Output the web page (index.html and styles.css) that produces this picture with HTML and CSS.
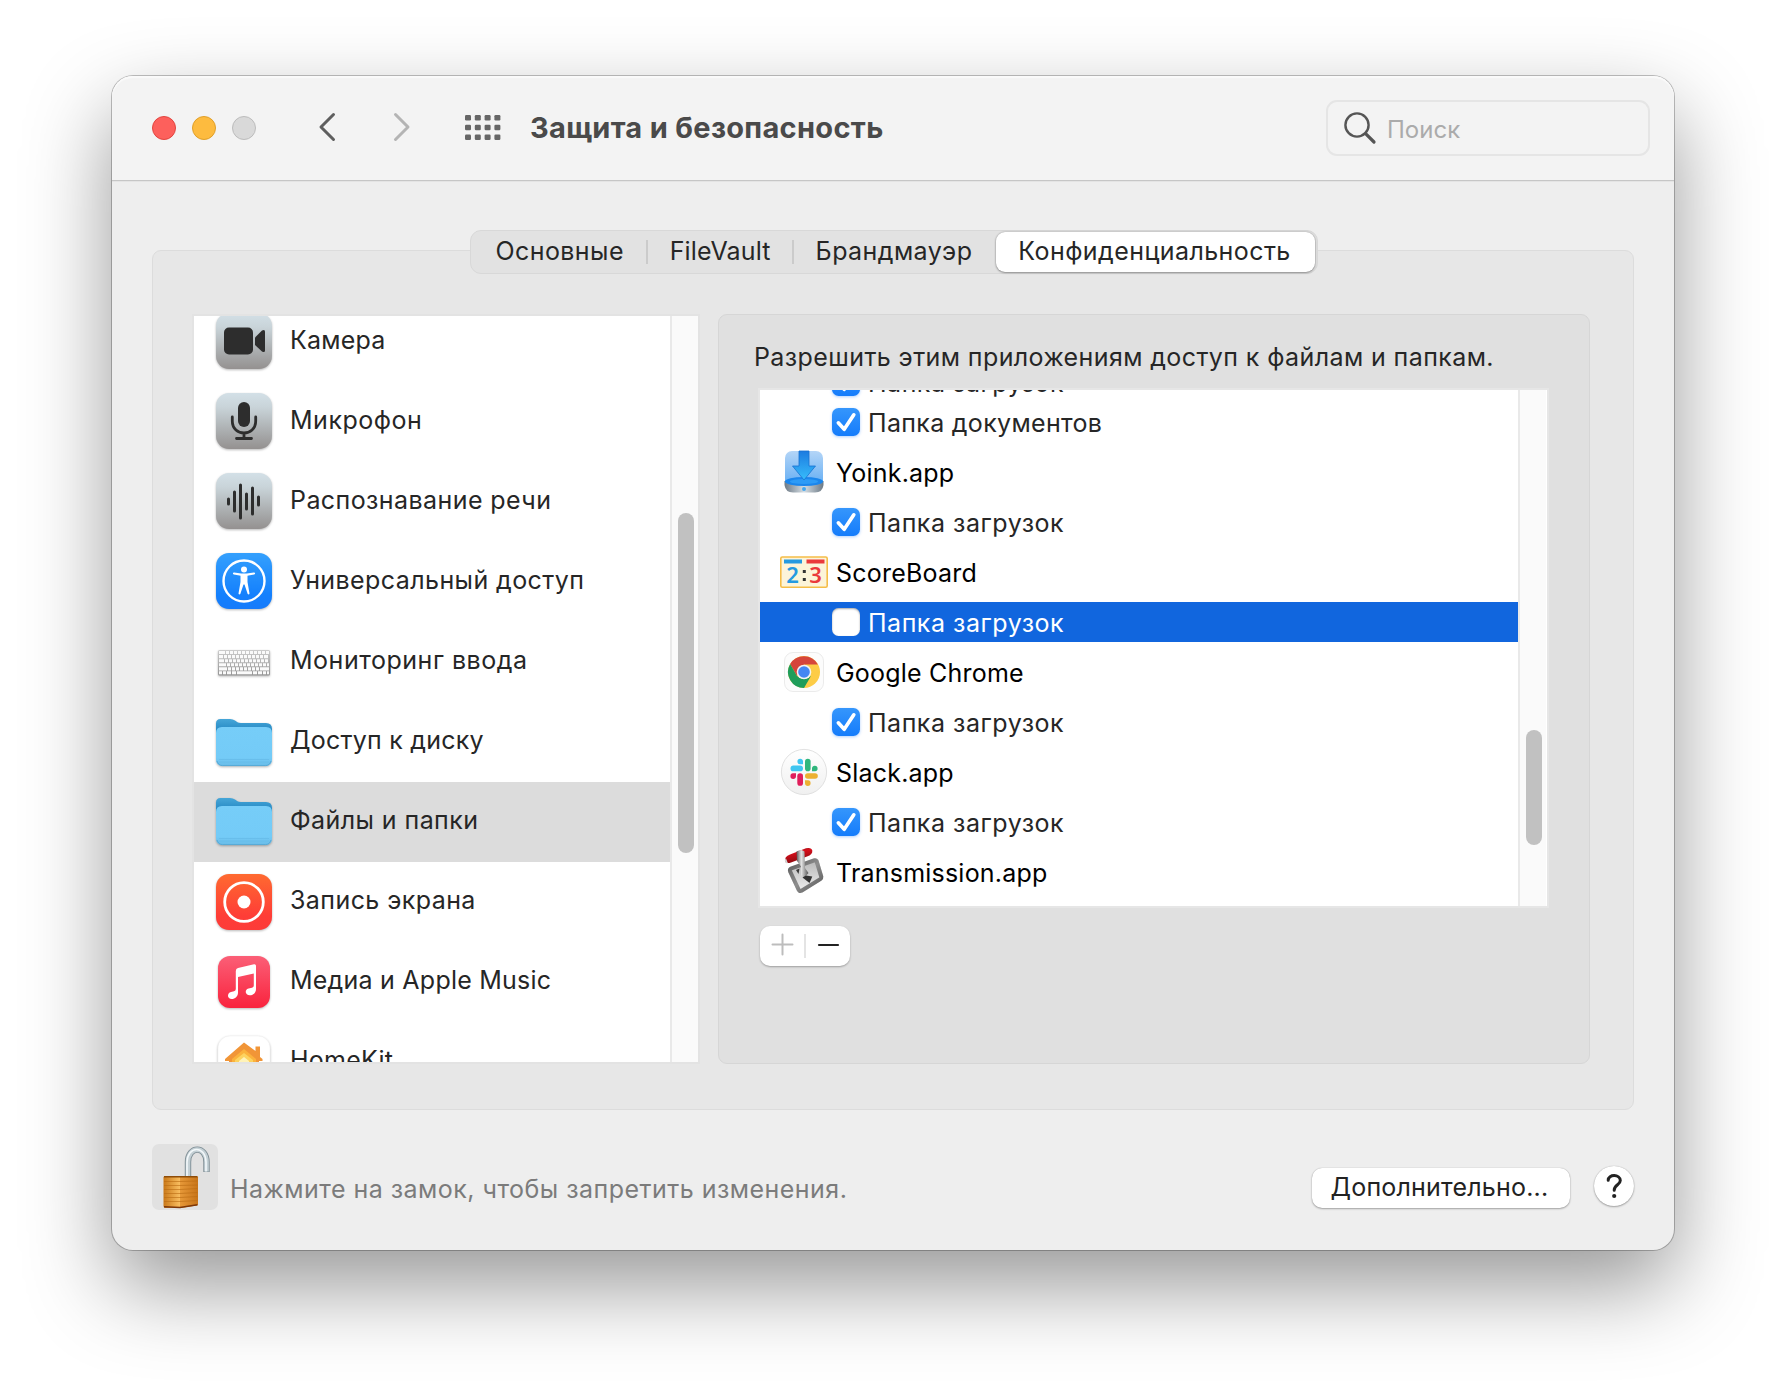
FILE: index.html
```html
<!DOCTYPE html>
<html lang="ru">
<head>
<meta charset="utf-8">
<title>Защита и безопасность</title>
<link rel="stylesheet" href="styles.css">
</head>
<body>
<svg class="defs" width="0" height="0" aria-hidden="true">
  <defs>
    <linearGradient id="gGray" x1="0" y1="0" x2="0" y2="1"><stop offset="0" stop-color="#d3e0e7"/><stop offset=".25" stop-color="#c9d4d9"/><stop offset="1" stop-color="#949190"/></linearGradient>
    <linearGradient id="gBlue" x1="0" y1="0" x2="0" y2="1"><stop offset="0" stop-color="#34a0fd"/><stop offset=".75" stop-color="#1480fd"/><stop offset="1" stop-color="#167bfb"/></linearGradient>
    <linearGradient id="gRec" x1="0" y1="0" x2="0" y2="1"><stop offset="0" stop-color="#ff6a30"/><stop offset=".75" stop-color="#fe3d37"/><stop offset="1" stop-color="#fd3b38"/></linearGradient>
    <linearGradient id="gMusic" x1="0" y1="0" x2="0" y2="1"><stop offset="0" stop-color="#fb5f77"/><stop offset="1" stop-color="#f9233d"/></linearGradient>
    <linearGradient id="gBack" x1="0" y1="0" x2="0" y2="1"><stop offset="0" stop-color="#46a6d8"/><stop offset="1" stop-color="#1a7fbd"/></linearGradient>
    <linearGradient id="gFront" x1="0" y1="0" x2="0" y2="1"><stop offset="0" stop-color="#76cdf8"/><stop offset=".78" stop-color="#74cbf7"/><stop offset="1" stop-color="#69bce8"/></linearGradient>
    <linearGradient id="gKeys" x1="0" y1="0" x2="0" y2="1"><stop offset="0" stop-color="#cccccc"/><stop offset="1" stop-color="#969696"/></linearGradient>
    <linearGradient id="gYoinkBack" x1="0" y1="0" x2="0" y2="1"><stop offset="0" stop-color="#b4d5f7"/><stop offset="1" stop-color="#5aa9f3"/></linearGradient>
    <linearGradient id="gYoinkBase" x1="0" y1="0" x2="1" y2="0"><stop offset="0" stop-color="#6d7a86"/><stop offset=".5" stop-color="#d5dde3"/><stop offset="1" stop-color="#6d7a86"/></linearGradient>
    <linearGradient id="gYoinkArrow" x1="0" y1="0" x2="0" y2="1"><stop offset="0" stop-color="#1c7be0"/><stop offset="1" stop-color="#37bdfb"/></linearGradient>
    <linearGradient id="gSlack" x1="0" y1="0" x2="0" y2="1"><stop offset="0" stop-color="#ffffff"/><stop offset="1" stop-color="#f0f0f0"/></linearGradient>
    <linearGradient id="gMetal" x1="0" y1="0" x2="1" y2="1"><stop offset="0" stop-color="#5c5c5c"/><stop offset=".5" stop-color="#8e8e8e"/><stop offset="1" stop-color="#5a5a5a"/></linearGradient>
    <linearGradient id="gPlate" x1="0" y1="0" x2="0" y2="1"><stop offset="0" stop-color="#b4b4b4"/><stop offset="1" stop-color="#f2f2f2"/></linearGradient>
    <linearGradient id="gShaft" x1="0" y1="0" x2="1" y2="0"><stop offset="0" stop-color="#555"/><stop offset=".4" stop-color="#e4e4e4"/><stop offset="1" stop-color="#555"/></linearGradient>
    <linearGradient id="gHandle" x1="0" y1="0" x2=".3" y2="1"><stop offset="0" stop-color="#5f0a0c"/><stop offset=".35" stop-color="#d80f1b"/><stop offset="1" stop-color="#8d0a10"/></linearGradient>
    <linearGradient id="gLockFront" x1="0" y1="0" x2="1" y2="0"><stop offset="0" stop-color="#c97818"/><stop offset=".5" stop-color="#fbc163"/><stop offset="1" stop-color="#f3a53f"/></linearGradient>
    <linearGradient id="gLockSide" x1="0" y1="0" x2="1" y2="0"><stop offset="0" stop-color="#e08b2a"/><stop offset="1" stop-color="#b9640d"/></linearGradient>
    <symbol id="folder" viewBox="0 0 56 56">
      <path d="M0 20V8.500Q0 4 4.500 4H14Q17 4 19 5.500L21.500 7.200Q22.500 8 25 8H50Q56 8 56 14V20Z" fill="url(#gBack)"/>
      <path d="M0 18Q0 12 6 12H50Q56 12 56 18V44.500Q56 51 49.500 51H6.500Q0 51 0 44.500Z" fill="url(#gFront)"/>
      <path d="M3 44.500H53M3 47H53" stroke="#5fb4e2" stroke-width=".8" opacity=".6"/>
      <path d="M1 46Q2.500 50.600 6.500 50.600H49.500Q53.500 50.600 55 46" fill="none" stroke="#57a9d6" stroke-width="1"/>
    </symbol>
    <symbol id="check" viewBox="0 0 28 28">
      <path d="M6.300 14.800 12.200 21.300 21.800 6.800" fill="none" stroke="#fff" stroke-width="3.600" stroke-linecap="round" stroke-linejoin="round"/>
    </symbol>
  </defs>
</svg>

<main class="window">
  <header class="toolbar">
    <div class="lights"><span class="light red"></span><span class="light yellow"></span><span class="light gray"></span></div>
    <nav class="arrows">
      <svg width="18" height="30" viewBox="0 0 18 30"><path d="M15.500 2.500 3 15 15.500 27.500" class="chev"/></svg>
      <svg width="18" height="30" viewBox="0 0 18 30"><path d="M2.500 2.500 15 15 2.500 27.500" class="chev off"/></svg>
    </nav>
    <svg class="grid" width="36" height="26" viewBox="0 0 36 26"><g fill="#666">
      <rect x="0" y="0" width="6" height="5.500" rx="1.200"/><rect x="9.800" y="0" width="6" height="5.500" rx="1.200"/><rect x="19.600" y="0" width="6" height="5.500" rx="1.200"/><rect x="29.400" y="0" width="6" height="5.500" rx="1.200"/>
      <rect x="0" y="9.700" width="6" height="5.500" rx="1.200"/><rect x="9.800" y="9.700" width="6" height="5.500" rx="1.200"/><rect x="19.600" y="9.700" width="6" height="5.500" rx="1.200"/><rect x="29.400" y="9.700" width="6" height="5.500" rx="1.200"/>
      <rect x="0" y="19.500" width="6" height="5.500" rx="1.200"/><rect x="9.800" y="19.500" width="6" height="5.500" rx="1.200"/><rect x="19.600" y="19.500" width="6" height="5.500" rx="1.200"/><rect x="29.400" y="19.500" width="6" height="5.500" rx="1.200"/></g></svg>
    <h1 class="title">Защита и безопасность</h1>
    <div class="search">
      <svg width="34" height="34" viewBox="0 0 34 34" fill="none" stroke="#555" stroke-linecap="round"><circle cx="14" cy="14" r="11.600" stroke-width="2.400"/><path d="M22.600 22.600 31 31" stroke-width="3.200"/></svg>
      <span>Поиск</span>
    </div>
  </header>

  <div class="tabs">
    <div class="tab t1"><span>Основные</span></div>
    <div class="tab t2"><span>FileVault</span></div>
    <div class="tab t3"><span>Брандмауэр</span></div>
    <div class="tab t4 active"><span>Конфиденциальность</span></div>
  </div>

  <section class="panel">
    <div class="list sidebar">
      <ul class="categories">
        <li><svg class="icon" viewBox="0 0 56 56"><rect width="56" height="56" rx="13" fill="url(#gGray)"/><rect x="8" y="14.500" width="29" height="27" rx="5" fill="#2d2d2d"/><path d="M39 24.500 46 17.500Q49 16 49 18.500V37.500Q49 40 46 38.500L39 32Z" fill="#2d2d2d"/></svg><span class="ls2">Камера</span></li>
        <li><svg class="icon" viewBox="0 0 56 56"><rect width="56" height="56" rx="13" fill="url(#gGray)"/><rect x="22" y="9" width="12" height="25" rx="6" fill="#2d2d2d"/><path d="M16.300 24V28C16.300 44 39.700 44 39.700 28V24M28 40V45M20.500 45.500H35.500" fill="none" stroke="#2d2d2d" stroke-width="2.800" stroke-linecap="round"/></svg><span class="ls5">Микрофон</span></li>
        <li><svg class="icon" viewBox="0 0 56 56"><rect width="56" height="56" rx="13" fill="url(#gGray)"/><path d="M12.500 26V31M18.500 19V38M24.500 12V45M30.500 21V36M36.500 15V41M42.500 24V32" stroke="#2d2d2d" stroke-width="3" stroke-linecap="round"/></svg><span>Распознавание речи</span></li>
        <li><svg class="icon" viewBox="0 0 56 56"><rect width="56" height="56" rx="13" fill="url(#gBlue)"/><circle cx="28" cy="28" r="20.500" fill="none" stroke="#fff" stroke-width="2.400"/><circle cx="28" cy="16.500" r="3" fill="#fff"/><path d="M18 20.500 25 21.700H31L38 20.500" fill="none" stroke="#fff" stroke-width="2.200" stroke-linecap="round" stroke-linejoin="round"/><path d="M24.500 21H31.500V29L33.500 40.500Q33 42 31.700 41L28.500 31.500H27.500L24.300 41Q23 42 22.500 40.500L24.500 29Z" fill="#fff"/></svg><span>Универсальный доступ</span></li>
        <li><svg class="icon" viewBox="0 0 56 56"><rect x="2" y="17" width="52" height="25.500" rx="1.500" fill="url(#gKeys)"/><g fill="none" stroke="#fafafa" stroke-width="3.100"><path d="M3 19.500H53" stroke-dasharray="6 1 3 1 3 1 3 1 3 1 3 1 3 1 3 1 3 1 3 1 3 1 3 1"/><path d="M3 23.600H53" stroke-dasharray="4 1 3 1 3 1 3 1 3 1 3 1 3 1 3 1 3 1 3 1 3 1 4 1"/><path d="M3 27.700H53" stroke-dasharray="5 1 3 1 3 1 3 1 3 1 3 1 3 1 3 1 3 1 3 1 3 1 3 1"/><path d="M3 31.800H53" stroke-dasharray="7 1 3 1 3 1 3 1 3 1 3 1 3 1 3 1 3 1 3 1 3 1"/><path d="M3 35.900H53" stroke-dasharray="8 1 3 1 3 1 3 1 3 1 3 1 3 1 3 1 3 1 9 1"/><path d="M3 39.800H53" stroke-dasharray="3 1 3 1 4 1 4 1 15 1 4 1 4 1 3 1 3 1"/></g></svg><span class="ls5">Мониторинг ввода</span></li>
        <li><svg class="icon" viewBox="0 0 56 56"><use href="#folder" y="2" width="56" height="56"/></svg><span class="ls2">Доступ к диску</span></li>
        <li class="selected"><svg class="icon" viewBox="0 0 56 56"><use href="#folder" y="1" width="56" height="56"/></svg><span>Файлы и папки</span></li>
        <li><svg class="icon" viewBox="0 0 56 56"><rect y="1" width="56" height="56" rx="13" fill="url(#gRec)"/><circle cx="28" cy="29" r="19.300" fill="none" stroke="#fff" stroke-width="2.800"/><circle cx="28" cy="29" r="6.500" fill="#fff"/></svg><span>Запись экрана</span></li>
        <li><svg class="icon" viewBox="0 0 56 56"><rect x="2" y="3" width="52" height="52" rx="12" fill="url(#gMusic)"/><path d="M19.800 18Q19.800 15.500 22 15L38 11.200Q40 10.900 40 12.800V36C40 40 37 42.300 33.800 42.300C28.800 42.300 28.500 36.600 32.500 35.600L36 34.800Q37.800 34.300 37.800 32.500V20.500L22 24V39.500C22 43.500 19 46 15.800 46C11 46 10.800 40 15 39L18 38.300Q19.800 37.800 19.800 36Z" fill="#fff"/></svg><span class="ls2">Медиа и Apple Music</span></li>
        <li><svg class="icon" viewBox="0 0 56 56"><rect x="2" y="3" width="52" height="52" rx="12" fill="#fff" stroke="#f2f2f2" stroke-width=".6"/><path d="M39.500 15V13.500H44V24L46.500 26V28H43V46H13V28H9V26L28 9.500 39.500 18Z" fill="#f19537"/><path d="M28 16 40 26V46H16V26Z" fill="#fbb23c"/><path d="M28 20 37 27V46H19V27Z" fill="#fdd35f"/><path d="M28 24 33 28V46H23V28Z" fill="#fff3b8"/></svg><span class="ls2">HomeKit</span></li>
      </ul>
      <div class="track"><div class="thumb"></div></div>
    </div>

    <div class="detail">
      <p class="lead">Разрешить этим приложениям доступ к файлам и папкам.</p>
      <div class="list apps">
        <ul class="rows">
          <li class="perm first"><svg class="box on"><use href="#check"/></svg><span class="ls5">Папка загрузок</span></li>
          <li class="perm"><svg class="box on"><use href="#check"/></svg><span class="ls3">Папка документов</span></li>
          <li class="app"><svg class="appicon" viewBox="0 0 48 48"><rect x="5" y="3" width="38" height="38" rx="7" fill="url(#gYoinkBack)"/><path d="M4.500 33H43.500V37Q42.500 44.500 35 44.500H13Q5.500 44.500 4.500 37Z" fill="url(#gYoinkBase)"/><ellipse cx="24" cy="33.500" rx="19" ry="4.500" fill="#1b86ec"/><ellipse cx="24" cy="33.500" rx="14" ry="2.600" fill="#2d9bf6"/><path d="M19 3H29V18H35.500L24 32 12.500 18H19Z" fill="url(#gYoinkArrow)" stroke="#1772d2" stroke-width=".8"/><circle cx="24" cy="41" r="2" fill="#46a7ee"/></svg><span>Yoink.app</span></li>
          <li class="perm"><svg class="box on"><use href="#check"/></svg><span class="ls5">Папка загрузок</span></li>
          <li class="app"><svg class="appicon" viewBox="0 0 48 48"><rect x=".8" y="9" width="46.400" height="30.200" rx="1.500" fill="#fcf4d9" stroke="#f5bd48" stroke-width="1.600"/><rect x="4" y="11.500" width="18" height="4" fill="#259ae0"/><rect x="26.500" y="11.500" width="18" height="4" fill="#ea3a3c"/><text x="6.300" y="35" class="score blue">2</text><text x="29.300" y="35" class="score rose">3</text><rect x="22.800" y="22" width="3" height="3" fill="#333"/><rect x="22.800" y="30" width="3" height="3" fill="#333"/></svg><span>ScoreBoard</span></li>
          <li class="perm selected"><span class="box off"></span><span class="ls5">Папка загрузок</span></li>
          <li class="app"><svg class="appicon" viewBox="0 0 48 48"><rect x="4.500" y="4.500" width="39" height="39" rx="8.500" fill="#fcfcfc" stroke="#e6e6e6" stroke-width=".8"/><circle cx="24" cy="24" r="16" fill="#fdcc46"/><path d="M24 16.500H37.860A16 16 0 0 0 10.140 16L17 28Z" fill="#d6453b"/><path d="M10.140 16A16 16 0 0 0 24 40L31 28Q24 34 17 28Z" fill="#1f9d5a"/><circle cx="24" cy="24" r="7.300" fill="#f4f4f4"/><circle cx="24" cy="24" r="5.800" fill="#4587f3"/></svg><span>Google Chrome</span></li>
          <li class="perm"><svg class="box on"><use href="#check"/></svg><span class="ls5">Папка загрузок</span></li>
          <li class="app"><svg class="appicon" viewBox="0 0 48 48"><circle cx="24" cy="24" r="22.600" fill="url(#gSlack)" stroke="#d9d9d9" stroke-width=".8"/><g transform="translate(0 .3)"><rect x="10.500" y="17.200" width="12.500" height="5.800" rx="2.900" fill="#3fc5f0"/><path d="M23 16H20A2.800 2.800 0 1 1 23 13Z" fill="#3fc5f0"/><rect x="25" y="10.500" width="5.600" height="12.500" rx="2.800" fill="#2fb67c"/><path d="M32 23V20A2.800 2.800 0 1 1 35 23Z" fill="#2fb67c"/><rect x="25" y="25" width="12.800" height="5.500" rx="2.750" fill="#ecb032"/><path d="M25 32H28A2.800 2.800 0 1 1 25 35Z" fill="#ecb032"/><rect x="17.300" y="25" width="5.700" height="12.500" rx="2.850" fill="#e01e5b"/><path d="M16 25V28A2.800 2.800 0 1 1 13 25Z" fill="#e01e5b"/></g></svg><span>Slack.app</span></li>
          <li class="perm"><svg class="box on"><use href="#check"/></svg><span class="ls5">Папка загрузок</span></li>
          <li class="app"><svg class="appicon" viewBox="0 0 48 48"><path d="M10.500 20.500 35.500 10.500Q37.500 10 38.500 12L43.300 28.500Q43.800 31 41.500 32.500L22 44.800Q19 46.300 17.300 43L8.300 24.500Q7 22 10.500 20.500Z" fill="url(#gPlate)"/><path d="M11.500 20.300 34.500 12.300Q36 12 36.600 13.500L41.300 28.800Q41.500 30.300 40.200 31.200L21.500 42.800Q19.500 43.700 18.700 41.800L10.200 23.500Q9.300 21.200 11.500 20.300Z" fill="none" stroke="url(#gMetal)" stroke-width="4"/><path d="M5 13Q4.200 8.500 10 6.500L26 .2Q31.500 -1 32.300 2.500 32.800 6.500 27 8.500L11 14.500Q6 16 5 13Z" fill="url(#gHandle)"/><path d="M5.200 14.300Q4.200 12 5.800 10L7.800 15Q6 16 5.200 14.300Z" fill="#d5d5d5"/><path d="M16.500 3.500Q21.500 .5 24.500 3.500L25 20 28.500 25 24 30 20 26 21 18.500 17 13Z" fill="url(#gShaft)"/><path d="M22.500 29.500 26 27.500 32.300 28.500 29.500 35Z" fill="#333"/><path d="M16 22 19.500 20.500 18.500 26Z" fill="#3a3a3a"/></svg><span>Transmission.app</span></li>
        </ul>
        <div class="track"><div class="thumb"></div></div>
      </div>
      <div class="addremove">
        <svg width="90" height="40" viewBox="0 0 90 40"><path d="M12.500 18.500H32.500M22.500 8.500V28.500" stroke="#bdbdbd" stroke-width="2" stroke-linecap="round"/><path d="M45 8V32" stroke="#dedede" stroke-width="1.600"/><path d="M59 19H78" stroke="#222" stroke-width="2.200" stroke-linecap="round"/></svg>
      </div>
    </div>
  </section>

  <footer class="footer">
    <svg class="lock" width="66" height="66" viewBox="0 0 66 66">
      <rect width="66" height="66" rx="7" fill="#e1e1e1"/>
      <path d="M36 33V18C36 1.500 54.500 1.500 54.500 18V28" fill="none" stroke="#7d8c93" stroke-width="6.400"/>
      <path d="M36 33V18C36 1.500 54.500 1.500 54.500 18V27.500" fill="none" stroke="#c4d0d5" stroke-width="4.600"/>
      <path d="M35 33V18C35.500 1.500 53.500 1 54 18V27.500" fill="none" stroke="#f3f8fa" stroke-width="1.600"/>
      <path d="M11.500 33.500Q11.500 32 13 32H44Q46 32 46 33.500V60Q46 61 44.500 61.500L29 64H13Q11.500 63.500 11.500 62Z" fill="url(#gLockFront)"/>
      <path d="M28 33H46V60Q46 61 44.500 61.500L28 64Z" fill="url(#gLockSide)" opacity=".75"/>
      <path d="M12 37.500H28L45.500 37M12 41.500H28L45.500 41M12 45.500H28L45.500 44.500M12 49.500H28L45.500 48.500M12 53.500H28L45.500 52.500M12 57.500H28L45.500 56.500" fill="none" stroke="#b96a12" stroke-width="1.100" opacity=".6"/>
      <path d="M12 32.700H45.500" stroke="#8e4c08" stroke-width="1.400"/>
      <path d="M12 62.800 28 63.500 45.500 60.800" fill="none" stroke="#7c3709" stroke-width="1.600"/>
    </svg>
    <p class="hint">Нажмите на замок, чтобы запретить изменения.</p>
    <button class="more">Дополнительно...</button>
    <button class="help" aria-label="Справка"><svg width="40" height="40" viewBox="0 0 40 40"><path d="M14.200 14.300C14.200 8 26.300 8 26.300 14.600C26.300 19 20.200 18.700 20.200 24.200" fill="none" stroke="#222" stroke-width="3" stroke-linecap="round"/><circle cx="20.200" cy="30" r="2.100" fill="#222"/></svg></button>
  </footer>
</main>
</body>
</html>
```
FILE: styles.css
```css
* { box-sizing: border-box; margin: 0; padding: 0; }

body {
  width: 1786px;
  height: 1398px;
  padding: 76px 112px 0;
  overflow: hidden;
  background: #fff;
  color: #262626;
  font-family: Inter, "Noto Sans", sans-serif;
  font-size: 25px;
  letter-spacing: .42px;
}

ul { list-style: none; }
svg { display: block; flex: none; }
span { white-space: nowrap; }
.defs { position: absolute; }

/* tracking */
.ls2 { letter-spacing: .23px; }
.ls3 { letter-spacing: .32px; }
.ls5 { letter-spacing: .52px; }

.window {
  width: 1562px;
  height: 1174px;
  border-radius: 21px;
  background: #eee;
  box-shadow: 0 0 0 1px rgba(0, 0, 0, .24), 0 36px 86px rgba(0, 0, 0, .41);
}

/* toolbar */
.toolbar {
  display: flex;
  align-items: center;
  height: 105px;
  padding: 0 24px 1px 40px;
  border-bottom: 1px solid #c6c6c6;
  border-radius: 21px 21px 0 0;
  background: #f3f3f3;
  box-shadow: inset 0 2px 1px #fafafa, 0 1px 0 #e4e4e4;
}
.lights { display: flex; gap: 16px; }
.light { width: 24px; height: 24px; border: 1px solid; border-radius: 50%; }
.red { background: #fd605c; border-color: #e2453f; }
.yellow { background: #fdbb3f; border-color: #e09f29; }
.gray { background: #d9d9d9; border-color: #bcbcbc; }
.arrows { display: flex; gap: 57px; margin: -2px 0 0 62px; }
.chev { fill: none; stroke: #5e5e5e; stroke-width: 3; stroke-linecap: round; stroke-linejoin: round; }
.chev.off { stroke: #b4b4b4; }
.grid { margin-left: 54px; }
.title {
  width: 370px;
  margin: 1px 0 0 29px;
  color: #4a4a4a;
  font-size: 29px;
  font-weight: 700;
  line-height: 40px;
  letter-spacing: .32px;
  white-space: nowrap;
}
.search {
  display: flex;
  align-items: center;
  gap: 10px;
  width: 324px;
  height: 56px;
  margin-left: auto;
  padding: 0 16px;
  border: 2px solid #e5e5e5;
  border-radius: 11px;
  color: #ababab;
  font-size: 24px;
  letter-spacing: 0;
}
.search svg { margin-left: -1px; }
.search span { padding-top: 3px; }

/* tabs */
.tabs {
  position: relative;
  display: flex;
  width: 848px;
  height: 44px;
  margin: 49px 0 0 358px;
  padding: 2px;
  border: 1px solid #d8d8d8;
  border-radius: 11px;
  background: #e2e2e2;
  line-height: 39px;
  text-align: center;
}
.tab { display: flex; justify-content: center; height: 40px; margin-top: -1px; }
.t1 { width: 174px; }
.t2 { width: 146px; letter-spacing: .15px; }
.t2 span { padding-left: 2px; }
.t3 { width: 205px; }
.t4 { width: 320px; padding-right: 2px; }
.t2::before, .t3::before { content: ""; width: 2px; height: 24px; margin: 8px auto 0 0; background: #cbcbcb; }
.t2::after, .t3::after { content: ""; width: 2px; margin-left: auto; }
.active { border-radius: 9px; background: #fff; box-shadow: 0 0 2px rgba(0, 0, 0, .3), 0 1px 2px rgba(0, 0, 0, .3); }

/* content */
.panel {
  display: flex;
  gap: 18px;
  width: 1482px;
  height: 860px;
  margin: -24px 0 0 40px;
  padding: 63px 43px 0 39px;
  border: 1px solid #dcdcdc;
  border-radius: 9px;
  background: #e7e7e7;
}
.list { display: flex; overflow: hidden; border: 2px solid #e3e3e3; background: #fff; }
.sidebar { width: 508px; height: 750px; }
.categories { width: 476px; margin-top: -14px; }
.categories li {
  display: flex;
  gap: 18px;
  height: 80px;
  padding: 11px 0 0 22px;
}
.categories .selected { background: #dcdcdc; }
.categories span { line-height: 54px; }
.icon { width: 56px; height: 58px; padding-bottom: 2px; overflow: visible; filter: drop-shadow(0 1px 1px rgba(0, 0, 0, .28)); }
.track { width: 28px; border-left: 2px solid #e9e9e9; background: #fafafa; }
.thumb { width: 16px; margin-left: 6px; border-radius: 8px; background: #c1c1c1; }
.sidebar .thumb { height: 340px; margin-top: 197px; }

.detail {
  width: 872px;
  height: 750px;
  padding: 24px 40px 0 39px;
  border: 1px solid #d6d6d6;
  border-radius: 9px;
  background: #e0e0e0;
}
.lead { height: 49px; margin-left: -4px; line-height: 36px; letter-spacing: .4px; white-space: nowrap; }
.apps { width: 791px; height: 520px; border-color: #e6e6e6; }
.rows { display: flex; flex: none; flex-direction: column; gap: 10px; width: 758px; margin-top: -28px; }
.rows li { display: flex; flex: none; align-items: center; height: 40px; color: #000; }
.rows li span:last-child { padding-top: 2px; }
.rows .perm { gap: 8px; padding-left: 72px; color: #262626; }
.rows .first { margin-bottom: -10px; }
.rows .selected { background: #1166de; color: #fff; }
.rows .app { gap: 8px; padding-left: 20px; letter-spacing: .21px; }
.appicon { width: 48px; height: 48px; overflow: visible; }
.box { width: 28px; height: 28px; border-radius: 6.5px; }
.on { background: linear-gradient(#3596fc, #157cfb); box-shadow: 0 1px 3px rgba(30, 120, 250, .35); }
.off { background: #fff; box-shadow: inset 0 1px 2px rgba(0, 0, 0, .35); }
.score { font: 600 22px "Noto Sans", sans-serif; letter-spacing: 0; }
.blue { fill: #259ae0; }
.rose { fill: #ea3a3c; }
.apps .thumb { height: 115px; margin-top: 340px; }
.addremove { width: 90px; height: 40px; margin: 18px 0 0 2px; border-radius: 10px; background: #fff; box-shadow: 0 1px 2px rgba(0, 0, 0, .3); }

/* footer */
.footer { display: flex; align-items: flex-start; width: 1482px; margin: 34px 0 0 40px; }
.hint { width: 1094px; padding: 27px 0 0 12px; color: #7b7b7b; line-height: 36px; letter-spacing: .47px; }
button { border: 0; background: #fff; color: #222; font: inherit; box-shadow: 0 0 1px rgba(0, 0, 0, .3), 0 1px 2px rgba(0, 0, 0, .3); }
.more { width: 258px; height: 40px; margin-top: 24px; padding: 0 3px 2px 0; border-radius: 10px; line-height: 36px; letter-spacing: .2px; }
.help { width: 40px; height: 40px; margin: 22px 0 0 24px; border-radius: 50%; }
```
